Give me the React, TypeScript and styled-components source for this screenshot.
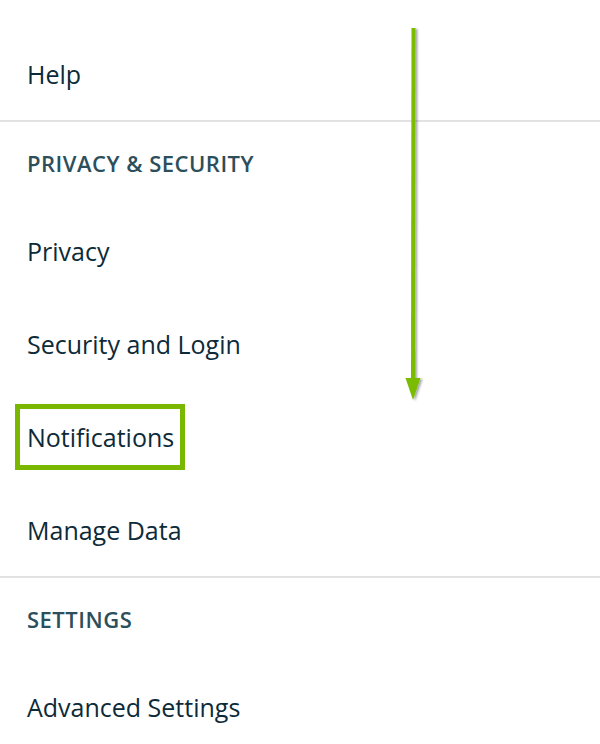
import React from "react";
import styled, { createGlobalStyle } from "styled-components";

const Global = createGlobalStyle`
  html, body { margin: 0; padding: 0; background: #ffffff; }
  body { font-family: "Open Sans", "Liberation Sans", sans-serif; }
`;

const Page = styled.div`
  position: relative;
  width: 600px;
  height: 744px;
  overflow: hidden;
  background: #fff;
  padding-top: 27px;
  box-sizing: border-box;
`;

const Section = styled.section<{ $divider?: boolean }>`
  border-top: ${(p) => (p.$divider ? "2px solid #e2e2e2" : "none")};
`;

const Header = styled.div`
  height: 82px;
  display: flex;
  align-items: center;
  padding-left: 27px;
  font-size: 22px;
  font-weight: 600;
  letter-spacing: 0.5px;
  color: #2c4f5b;
`;

const Row = styled.div`
  height: 93px;
  display: flex;
  align-items: center;
  padding-left: 27px;
  font-size: 25px;
  line-height: 34px;
  color: #0d2a38;
`;

const Label = styled.span<{ $highlight?: boolean }>`
  position: relative;
  &::after {
    content: "";
    display: ${(p) => (p.$highlight ? "block" : "none")};
    position: absolute;
    left: -12px;
    right: -11px;
    top: -16px;
    bottom: -16px;
    border: 5px solid #7ab800;
  }
`;

const Arrow = styled.svg`
  position: absolute;
  left: 400px;
  top: 24px;
  overflow: visible;
`;

export default function App() {
  return (
    <>
      <Global />
      <Page>
        <Section>
          <Row>
            <Label>Help</Label>
          </Row>
        </Section>
        <Section $divider>
          <Header>PRIVACY &amp; SECURITY</Header>
          <Row>
            <Label>Privacy</Label>
          </Row>
          <Row>
            <Label>Security and Login</Label>
          </Row>
          <Row>
            <Label $highlight>Notifications</Label>
          </Row>
          <Row>
            <Label>Manage Data</Label>
          </Row>
        </Section>
        <Section $divider>
          <Header>SETTINGS</Header>
          <Row>
            <Label>Advanced Settings</Label>
          </Row>
        </Section>
        <Arrow width="30" height="380" viewBox="0 0 30 380">
          <defs>
            <filter id="sh" x="-50%" y="-10%" width="200%" height="120%">
              <feDropShadow dx="2" dy="1" stdDeviation="1.2" floodColor="#000" floodOpacity="0.35" />
            </filter>
          </defs>
          <g filter="url(#sh)">
            <line x1="13.5" y1="4" x2="13" y2="357" stroke="#79bc06" strokeWidth="4" />
            <polygon points="5.5,354 20.5,354 13,376" fill="#79bc06" />
          </g>
        </Arrow>
      </Page>
    </>
  );
}
